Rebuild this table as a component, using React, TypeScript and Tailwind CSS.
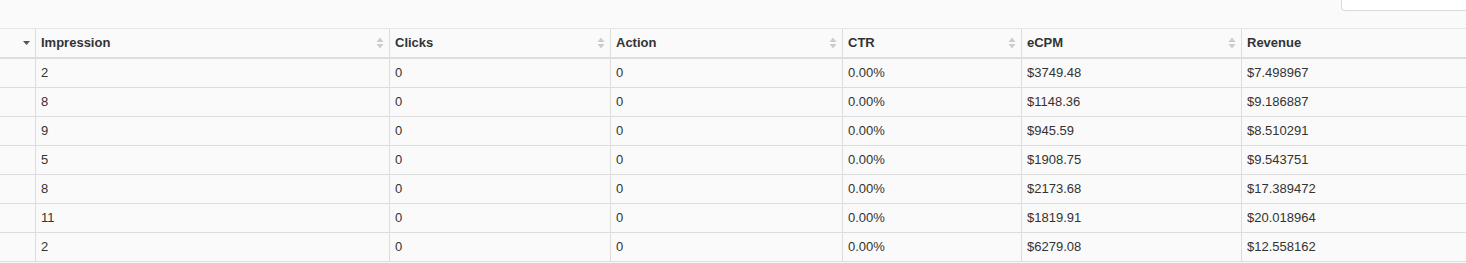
import React from "react";

const rows = [
  ["2", "0", "0", "0.00%", "$3749.48", "$7.498967"],
  ["8", "0", "0", "0.00%", "$1148.36", "$9.186887"],
  ["9", "0", "0", "0.00%", "$945.59", "$8.510291"],
  ["5", "0", "0", "0.00%", "$1908.75", "$9.543751"],
  ["8", "0", "0", "0.00%", "$2173.68", "$17.389472"],
  ["11", "0", "0", "0.00%", "$1819.91", "$20.018964"],
  ["2", "0", "0", "0.00%", "$6279.08", "$12.558162"],
];

const widths = ["w-[354px]", "w-[221px]", "w-[232px]", "w-[179px]", "w-[220px]", "flex-1"];
const headers = ["Impression", "Clicks", "Action", "CTR", "eCPM", "Revenue"];

function SortIcon() {
  return (
    <svg width="8" height="12" viewBox="0 0 8 12" className="shrink-0">
      <path d="M4 0.5 L7.5 5 L0.5 5 Z" fill="#cccccc" />
      <path d="M0.5 7 L7.5 7 L4 11.5 Z" fill="#cccccc" />
    </svg>
  );
}

export default function App() {
  return (
    <div
      className="min-h-screen w-full bg-[#fafafa] text-[13px] text-[#333] overflow-hidden"
      style={{ fontFamily: '"Liberation Sans", Arial, sans-serif' }}
    >
      <div className="h-[28px] flex justify-end">
        <div className="w-[125px] h-[11px] bg-white border-l border-b border-[#dcdcdc] rounded-bl-[4px]" />
      </div>
      <div className="flex border-t border-[#e6e6e6] border-b-2 border-b-[#dddddd]">
        <div className="w-[36px] shrink-0 border-r border-[#dddddd] flex items-center justify-end pr-[5px] h-[28px]">
          <svg width="7" height="4" viewBox="0 0 7 4">
            <path d="M0 0 L7 0 L3.5 4 Z" fill="#555" />
          </svg>
        </div>
        {headers.map((h, i) => (
          <div
            key={h}
            className={`${widths[i]} shrink-0 ${i < 5 ? "border-r border-[#dddddd]" : ""} flex items-center justify-between px-[5px] py-[5px] leading-[18px] font-bold`}
          >
            <span>{h}</span>
            {i < 5 && <SortIcon />}
          </div>
        ))}
      </div>
      {rows.map((r, ri) => (
        <div key={ri} className="flex border-b border-[#dddddd]">
          <div className="w-[36px] shrink-0 border-r border-[#dddddd] h-[28px]" />
          {r.map((c, i) => (
            <div
              key={i}
              className={`${widths[i]} shrink-0 ${i < 5 ? "border-r border-[#dddddd]" : ""} px-[5px] py-[5px] leading-[18px]`}
            >
              {c}
            </div>
          ))}
        </div>
      ))}
    </div>
  );
}
